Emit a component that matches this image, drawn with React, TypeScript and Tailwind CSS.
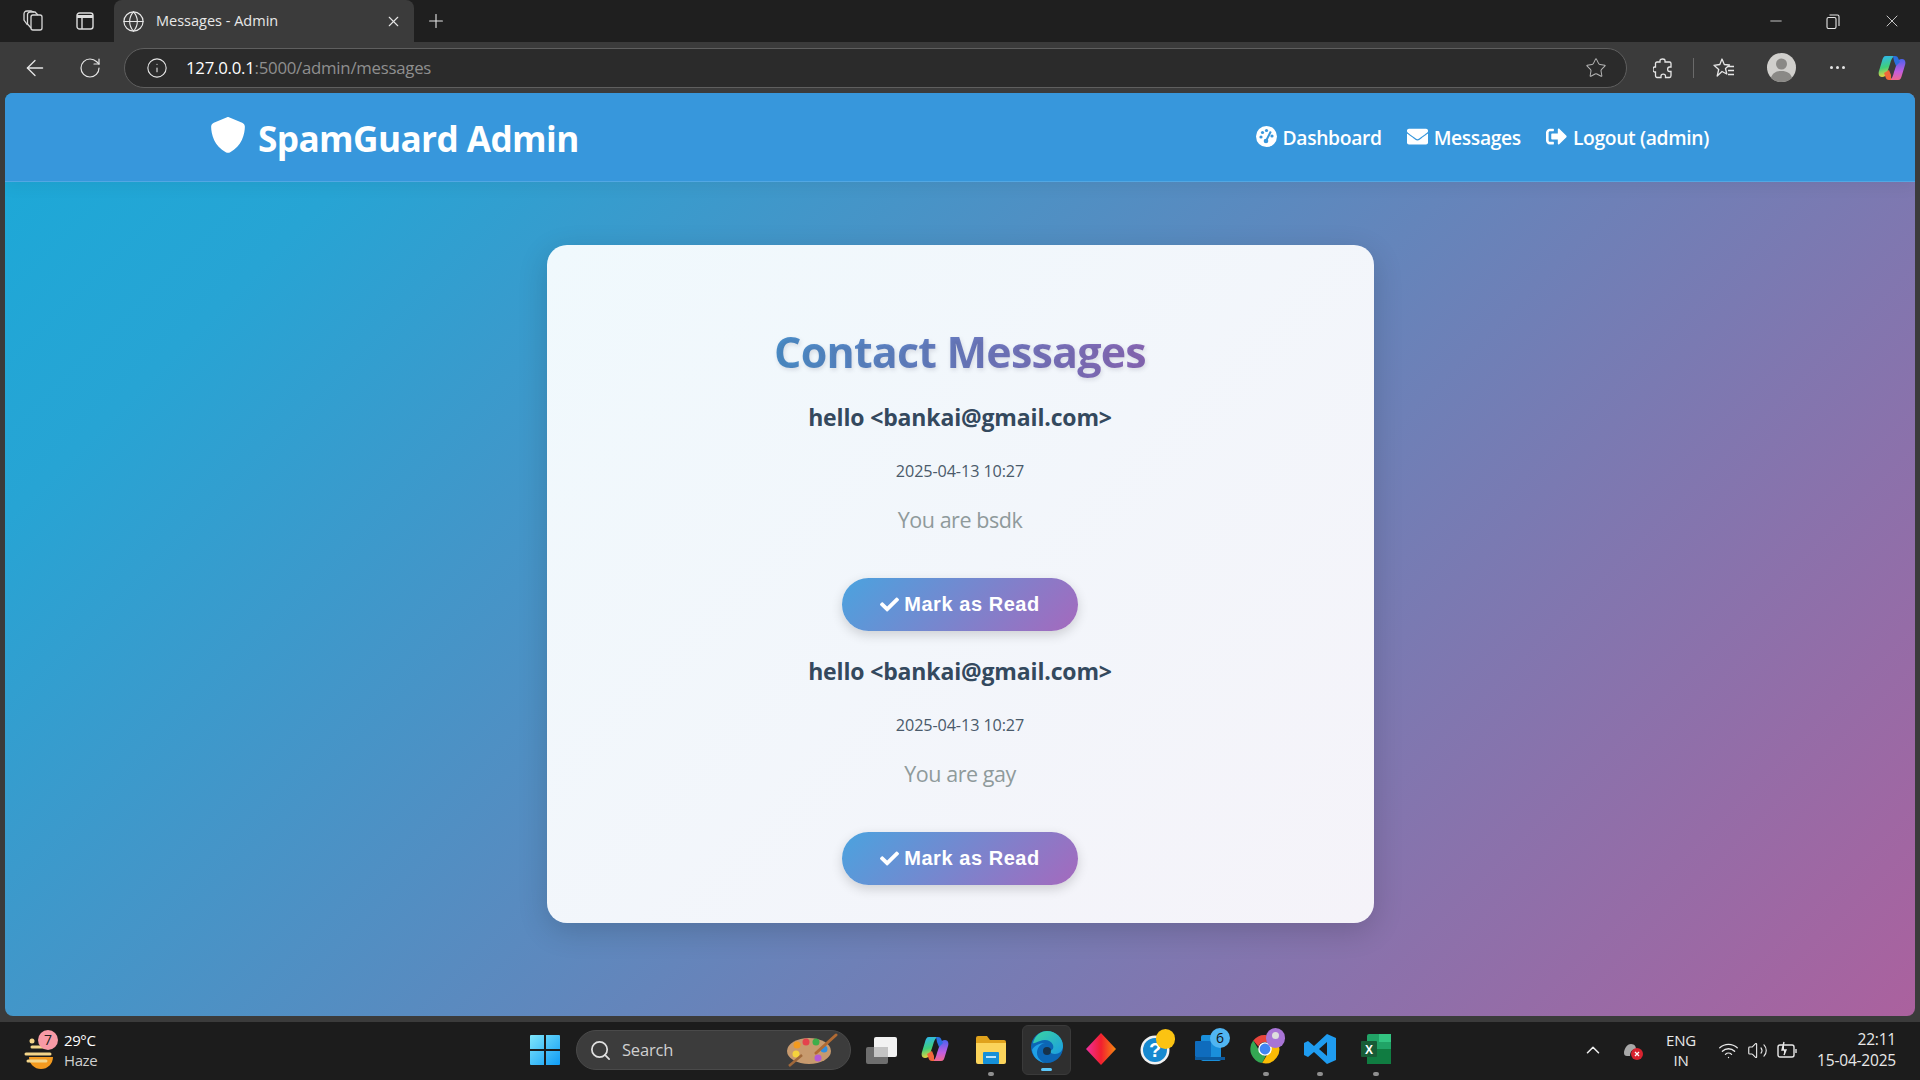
import { ArrowLeft, ChevronUp, Globe, Info, Minus, Plus, RotateCw, Search, Star, Volume2, Wifi, X } from "lucide-react";
import { FaCheck, FaEnvelope, FaSignOutAlt } from "react-icons/fa";
import { FaShield } from "react-icons/fa6";

const uiFont = "font-['Open_Sans','Noto_Sans',sans-serif]";

function CopilotIcon({ size }: { size: number }) {
  return (
    <svg width={size} height={size} viewBox="0 0 30 30">
      <defs>
        <linearGradient id={`cpa${size}`} x1="0.2" y1="0" x2="0.4" y2="1">
          <stop offset="0" stopColor="#2fb6f0" />
          <stop offset="0.55" stopColor="#3fcf7a" />
          <stop offset="1" stopColor="#f5d33c" />
        </linearGradient>
        <linearGradient id={`cpb${size}`} x1="0.6" y1="0" x2="0.6" y2="1">
          <stop offset="0" stopColor="#4a62ee" />
          <stop offset="0.6" stopColor="#c25de0" />
          <stop offset="1" stopColor="#f0688c" />
        </linearGradient>
      </defs>
      <path d="M9 3h9c-3 1-4 4-5 8l-3 9c-.8 2.500-2.500 4-5 4-3 0-4-3-3-6l3-10c.8-3 1.500-5 4-5z" fill={`url(#cpa${size})`} />
      <path d="M21 27h-9c3-1 4-4 5-8l3-9c.8-2.500 2.500-4 5-4 3 0 4 3 3 6l-3 10c-.8 3-1.500 5-4 5z" fill={`url(#cpb${size})`} />
      <path d="M16 3h2c2 0 3 1 3.500 3l1.500 3-4 4-2-5z" fill="#2a6fe0" />
      <path d="M14 27h-2c-2 0-3-1-3.500-3L7 20l5-3 2 5z" fill="#f2683a" />
    </svg>
  );
}

function DashboardIcon() {
  return (
    <svg width="21" height="21" viewBox="0 0 21 21">
      <circle cx="10.500" cy="10.500" r="10.500" fill="#fff" />
      <circle cx="5" cy="11" r="1.600" fill="#3797dc" />
      <circle cx="6.500" cy="6.500" r="1.600" fill="#3797dc" />
      <circle cx="10.500" cy="4.500" r="1.600" fill="#3797dc" />
      <circle cx="16" cy="10" r="1.600" fill="#3797dc" />
      <path d="M14.800 5.500 10.500 14" stroke="#3797dc" strokeWidth="2" />
      <circle cx="10" cy="15" r="2.300" fill="#3797dc" />
    </svg>
  );
}

function BrowserChrome() {
  return (
    <>
      <div className="h-[42px] flex items-center bg-[#1f1f1f] text-[#e6e6e6] shrink-0">
        <svg className="ml-[22px]" width="22" height="24" viewBox="0 0 22 24" fill="none" stroke="#d8d8d8" strokeWidth="1.300">
          <rect x="9" y="6" width="11" height="15" rx="2" />
          <path d="M9 19 5.500 15V5.500C5.500 4 7 3 8 3h5l3 3" />
          <path d="M5.500 16 2 11V5c0-1.500 1-3 3-3h4l3 1" />
        </svg>
        <svg className="ml-[32px]" width="18" height="18" viewBox="0 0 18 18" fill="none" stroke="#dcdcdc" strokeWidth="1.400">
          <rect x="1" y="1" width="16" height="16" rx="2.500" />
          <path d="M1 4.500h16" strokeWidth="3" />
          <path d="M6 5v12" />
        </svg>
        <div className="ml-[20px] w-[300px] h-full flex items-center bg-[#3b3b3b] rounded-t-lg">
          <Globe className="ml-[8px]" size={23} strokeWidth={1.2} color="#e6e6e6" />
          <span className={`ml-[11px] flex-1 text-[14.500px] text-[#e8e8e8] -mt-[1px] ${uiFont}`}>Messages - Admin</span>
          <X className="mr-[12px]" size={17} strokeWidth={1.5} />
        </div>
        <Plus className="ml-[11px]" size={22} strokeWidth={1.2} />
        <div className="ml-auto flex items-center">
          <Minus size={18} strokeWidth={1.100} />
          <svg className="ml-[41px]" width="14" height="15" viewBox="0 0 14 15" fill="none" stroke="#e6e6e6" strokeWidth="1.100">
            <rect x="1" y="3.500" width="9" height="11" rx="1.500" />
            <path d="M3.500 1h8c1 0 1.500.5 1.500 1.500V12" />
          </svg>
          <X className="ml-[42px] mr-[18px]" size={20} strokeWidth={1} />
        </div>
      </div>
      <div className="h-[51px] flex items-center bg-[#3b3b3b] text-[#e6e6e6] shrink-0">
        <ArrowLeft className="ml-[22px]" size={26} strokeWidth={1.2} />
        <RotateCw className="ml-[30px]" size={24} strokeWidth={1.2} />
        <div className="ml-[22px] w-[1503px] h-[40px] flex items-center rounded-full border border-[#5f5f5f] bg-[#2b2b2b]">
          <Info className="ml-[21px]" size={22} strokeWidth={1.2} />
          <span className={`ml-[18px] flex-1 text-[16.800px] tracking-[-0.25px] ${uiFont}`}>
            <span className="text-white">127.0.0.1</span>
            <span className="text-[#8f8f8f]">:5000/admin/messages</span>
          </span>
          <Star className="mr-[19px]" size={22} strokeWidth={1.1} color="#b5b5b5" />
        </div>
        <svg className="ml-[26px]" width="20" height="22" viewBox="0 0 20 22" fill="none" stroke="#e6e6e6" strokeWidth="1.300">
          <path d="M7 3.500C7 1.500 12 1.500 12 3.500V5h4.500c1 0 1.500.5 1.500 1.500V10h-1.500c-2.500 0-2.500 4.500 0 4.500H18v4c0 1-.5 2-1.500 2H12.500v-1.500c0-2.500-4.500-2.500-4.500 0v1.500H4c-1 0-1.500-1-1.500-2V15H1.500C-.5 15-.5 10 1.500 10h1V6.500C2.500 5.500 3 5 4 5h3z" />
        </svg>
        <div className="ml-[20px] w-px h-[20px] bg-[#6a6a6a]" />
        <svg className="ml-[19px]" width="22" height="22" viewBox="0 0 22 22" fill="none" stroke="#e6e6e6" strokeWidth="1.300">
          <path d="M9 2l2.300 5.500 5.200.5-4 3.500 1.300 5.500L9 14.500 4.200 19l1.500-6.500L1 8.300 6.800 7.500z" strokeLinejoin="round" />
          <path d="M15 9.500h6M15 13.500h6M15 17.500h6" />
        </svg>
        <svg className="ml-[32px]" width="29" height="29" viewBox="0 0 29 29">
          <circle cx="14.500" cy="14.500" r="14.500" fill="#d0cfcc" />
          <circle cx="14.500" cy="11" r="5.500" fill="#8a8986" />
          <path d="M4 25c1.500-5 5-7 10.500-7S23.500 20 25 25c-2.500 2.500-6 4-10.500 4S6.500 27.500 4 25z" fill="#8a8986" />
        </svg>
        <div className="ml-[34px] flex gap-[3px]">
          <div className="w-[3px] h-[3px] rounded-full bg-[#e6e6e6]" />
          <div className="w-[3px] h-[3px] rounded-full bg-[#e6e6e6]" />
          <div className="w-[3px] h-[3px] rounded-full bg-[#e6e6e6]" />
        </div>
        <div className="ml-[32px]">
          <CopilotIcon size={30} />
        </div>
      </div>
    </>
  );
}

function NavLink({ icon, label }: { icon: React.ReactNode; label: string }) {
  return (
    <a className="flex items-center gap-[6px] text-[19.300px] font-semibold text-white tracking-[-0.35px]">
      <span className="-mt-[5px]">{icon}</span>
      {label}
    </a>
  );
}

function MessageItem({ message }: { message: string }) {
  return (
    <div className="flex flex-col items-center">
      <h3 className="mt-[19px] mb-[1px] h-[32px] leading-[32px] text-[23px] font-bold text-[#34495e] tracking-[-0.15px]">
        {"hello <bankai@gmail.com>"}
      </h3>
      <p className="mt-[26px] h-[22px] leading-[22px] text-[16.200px] text-[#4a5a6a] tracking-[-0.1px]">2025-04-13 10:27</p>
      <p className="mt-[23px] h-[30px] leading-[30px] text-[21.500px] text-[#8f9a9b] tracking-[-0.45px]">{message}</p>
      <button className="mt-[43px] w-[236px] h-[53px] flex items-center justify-center gap-[5px] rounded-full bg-[linear-gradient(135deg,#4aa3df,#a569bd)] text-white text-[20px] font-bold tracking-[0.55px] font-['Liberation_Sans',sans-serif] shadow-[0_4px_12px_rgba(0,0,0,0.16)]">
        <FaCheck size={19} />
        <span className="-mt-[2px]">Mark as Read</span>
      </button>
    </div>
  );
}

function Page() {
  return (
    <div className={`h-[923px] mx-[5px] shrink-0 flex flex-col rounded-t-lg rounded-b-lg overflow-hidden bg-[linear-gradient(135deg,#1ba9d8_0%,#27a4d4_15%,#ab619e_100%)] ${uiFont}`}>
      <nav className="h-[89px] shrink-0 flex items-center justify-between pl-[205px] pr-[206px] bg-[#3797dc] border-b border-[#52a7e3] shadow-[0_4px_16px_rgba(0,0,0,0.06)]">
        <div className="flex items-center gap-[12px] mt-[1px]">
          <FaShield size={36} color="#fff" className="-mt-[4px]" />
          <span className="text-[35.200px] font-bold text-white tracking-[-0.6px] mt-[1px]">SpamGuard Admin</span>
        </div>
        <div className="flex items-center gap-[25px] mt-[3px]">
          <NavLink icon={<DashboardIcon />} label="Dashboard" />
          <NavLink icon={<FaEnvelope size={21} />} label="Messages" />
          <NavLink icon={<FaSignOutAlt size={21} />} label="Logout (admin)" />
        </div>
      </nav>
      <main className="flex-1 flex justify-center pt-[63px]">
        <div className="w-[827px] h-[678px] rounded-[20px] bg-[linear-gradient(135deg,#f0f9fd,#f5f3f9)] shadow-[0_8px_30px_rgba(0,0,0,0.16)] pt-[77px]">
          <h1 className="h-[60px] leading-[60px] text-center text-[43px] font-bold tracking-[-0.8px] [text-shadow:1px_2px_4px_rgba(60,60,90,0.15)]">
            <span className="bg-[linear-gradient(90deg,#4a90cc,#8a68b8)] bg-clip-text text-transparent">Contact Messages</span>
          </h1>
          <MessageItem message="You are bsdk" />
          <div className="h-[5px]" />
          <MessageItem message="You are gay" />
        </div>
      </main>
    </div>
  );
}

function TaskDot({ active }: { active?: boolean }) {
  return <div className={active ? "w-[11px] h-[3px] rounded-full bg-[#5cc8fa]" : "w-[6px] h-[4px] rounded-full bg-[#8f8f8f]"} />;
}

function TaskIcon({ children, dot, className }: { children: React.ReactNode; dot?: boolean; className?: string }) {
  return (
    <div className={`relative w-[32px] h-[58px] flex flex-col items-center shrink-0 ${className ?? ""}`}>
      <div className="mt-[10px] h-[34px] flex items-center justify-center">{children}</div>
      {dot && (
        <div className="mt-[6px]">
          <TaskDot />
        </div>
      )}
    </div>
  );
}

function Taskbar() {
  return (
    <div className={`h-[58px] mt-[6px] shrink-0 flex items-center bg-[#1c1c1c] text-[#e8e8e8] ${uiFont}`}>
      {/* weather */}
      <div className="relative ml-[24px] w-[32px] h-[34px] mt-[2px] shrink-0">
        <svg width="32" height="34" viewBox="0 0 32 34">
          <path d="M5 22h24a12 12 0 0 1-24 0z" fill="#f39a1f" />
          <path d="M8 12h16M2 19h24M4 26h18" stroke="#f4d58a" strokeWidth="3" strokeLinecap="round" />
          <circle cx="8" cy="6" r="2.500" fill="#f4d58a" />
        </svg>
        <div className="absolute -top-[5px] left-[14px] w-[20px] h-[20px] rounded-full bg-[#f89aa6] text-[#222] text-[14px] leading-[20px] text-center">7</div>
      </div>
      <div className="ml-[8px] w-[50px] text-[15px] leading-[20px] tracking-[-0.4px] -mt-[3px]">
        <div className="text-white">29°C</div>
        <div className="text-[#cfcfcf]">Haze</div>
      </div>
      {/* start */}
      <svg className="ml-[416px] shrink-0 -mt-[2px]" width="30" height="30" viewBox="0 0 30 30">
        <defs>
          <linearGradient id="win" x1="0" y1="0" x2="1" y2="1">
            <stop offset="0" stopColor="#7fe6fb" />
            <stop offset="1" stopColor="#0f9cf5" />
          </linearGradient>
        </defs>
        <path d="M0 1a1 1 0 0 1 1-1h13v14H0zM16 0h13a1 1 0 0 1 1 1v13H16zM0 16h14v14H1a1 1 0 0 1-1-1zM16 16h14v13a1 1 0 0 1-1 1H16z" fill="url(#win)" />
      </svg>
      {/* search */}
      <div className="ml-[16px] w-[275px] h-[40px] -mt-[2px] shrink-0 flex items-center rounded-full bg-[#3c3c3c] border border-[#4a4a4a]">
        <Search className="ml-[12px]" size={23} strokeWidth={1.8} color="#e0e0e0" />
        <span className="ml-[10px] flex-1 text-[16.500px] text-[#d0d0d0] tracking-[-0.2px]">Search</span>
        <svg className="mr-[12px]" width="52" height="34" viewBox="0 0 52 34">
          <ellipse cx="23" cy="18" rx="22" ry="13" fill="#c79a6e" />
          <circle cx="11" cy="12" r="3.500" fill="#f39a1f" />
          <circle cx="20" cy="9" r="3.500" fill="#e5424d" />
          <circle cx="30" cy="9" r="3.500" fill="#3fae4a" />
          <circle cx="38" cy="16" r="3.500" fill="#2f8fe0" />
          <circle cx="32" cy="25" r="3.500" fill="#b45ad6" />
          <circle cx="10" cy="21" r="3.500" fill="#f5d33c" />
          <path d="M30 20 50 2" stroke="#b06a33" strokeWidth="3" strokeLinecap="round" />
          <path d="M3 33 16 22" stroke="#a0683a" strokeWidth="2.500" />
        </svg>
      </div>
      {/* task view */}
      <svg className="ml-[15px] shrink-0 -mt-[2px]" width="31" height="27" viewBox="0 0 31 27">
        <rect x="0" y="10" width="22" height="17" rx="2" fill="#6e6e6e" />
        <rect x="8" y="0" width="23" height="20" rx="2" fill="#f2f2f2" />
        <rect x="8" y="10" width="14" height="10" fill="#c4c4c4" />
      </svg>
      {/* pinned */}
      <TaskIcon className="ml-[22px]">
        <CopilotIcon size={30} />
      </TaskIcon>
      <TaskIcon className="ml-[24px]" dot>
        <svg width="30" height="29" viewBox="0 0 30 29">
          <path d="M0 3a2 2 0 0 1 2-2h9l3 4h14a2 2 0 0 1 2 2v4H0z" fill="#e0a21c" />
          <path d="M0 8h30v19a2 2 0 0 1-2 2H2a2 2 0 0 1-2-2z" fill="#fbd45b" />
          <rect x="7" y="17" width="16" height="12" rx="1" fill="#1590d8" />
          <rect x="10" y="21" width="10" height="2" fill="#bfe6fb" />
        </svg>
      </TaskIcon>
      <div className="ml-[15px] w-[49px] h-[50px] -mt-[2px] shrink-0 flex flex-col items-center rounded-md bg-[#2f2f2f] border border-[#3a3a3a]">
        <svg className="mt-[5px]" width="32" height="32" viewBox="0 0 32 32">
          <defs>
            <linearGradient id="edgeA" x1="0" y1="0" x2="1" y2="1">
              <stop offset="0" stopColor="#3bd6a0" />
              <stop offset="1" stopColor="#1b9de2" />
            </linearGradient>
          </defs>
          <circle cx="16" cy="16" r="16" fill="#0c66b5" />
          <path d="M2 12C4 4 10 0 16 0c9 0 16 7 16 15 0 5-4 8-8 8-3 0-5-1-5-3 3-1 4-3 3-6-2-5-8-6-13-4-4 1-6 3-7 2z" fill="url(#edgeA)" />
          <path d="M14 12c-5 1-8 5-8 10 0 4 3 8 8 10-7-1-12-6-13-13 2-4 7-7 13-7z" fill="#1fa0e6" />
          <circle cx="16" cy="20" r="4" fill="#1c1c1c" opacity="0.7" />
        </svg>
        <div className="mt-[5px]">
          <TaskDot active />
        </div>
      </div>
      <TaskIcon className="ml-[14px]">
        <svg width="30" height="32" viewBox="0 0 30 32">
          <defs>
            <linearGradient id="dia" x1="0" y1="0" x2="1" y2="0">
              <stop offset="0" stopColor="#ef2fa0" />
              <stop offset="0.5" stopColor="#f21f2f" />
              <stop offset="1" stopColor="#f58a10" />
            </linearGradient>
          </defs>
          <path d="M15 0 30 16 15 32 0 16z" fill="url(#dia)" />
        </svg>
      </TaskIcon>
      <TaskIcon className="ml-[23px]">
        <div className="relative w-[32px] h-[32px]">
          <svg width="30" height="32" viewBox="0 0 30 32">
            <circle cx="15" cy="17" r="14.500" fill="#f2f2f2" />
            <circle cx="15" cy="17" r="12" fill="#1689d0" />
            <text x="15" y="24" textAnchor="middle" fontSize="20" fontWeight="700" fill="#fff" fontFamily="Liberation Sans">?</text>
          </svg>
          <div className="absolute -top-[4px] left-[16px] w-[19px] h-[20px] rounded-full bg-[#fbc312]" />
        </div>
      </TaskIcon>
      <TaskIcon className="ml-[23px]">
        <div className="relative w-[32px] h-[32px]">
          <svg width="30" height="32" viewBox="0 0 30 32">
            <rect x="6" y="2" width="20" height="26" rx="2" fill="#1a8fdb" />
            <rect x="0" y="8" width="16" height="16" rx="1" fill="#0f6cbd" />
            <path d="M0 24h30v3H0z" fill="#0c5a9e" />
          </svg>
          <div className="absolute -top-[5px] left-[15px] w-[20px] h-[20px] rounded-full bg-[#50b5f2] text-[#111] text-[14px] leading-[20px] text-center">6</div>
        </div>
      </TaskIcon>
      <TaskIcon className="ml-[23px]" dot>
        <div className="relative w-[32px] h-[32px]">
          <svg width="30" height="32" viewBox="0 0 32 32">
            <path d="M16 1a15 15 0 0 1 13 7.500H16a7.500 7.500 0 0 0-7 4.800L3.500 7A15 15 0 0 1 16 1z" fill="#e8453c" />
            <path d="M3.500 7 10 18a7.500 7.500 0 0 0 7 5l-4 8A15 15 0 0 1 3.500 7z" fill="#34a853" />
            <path d="M29 8.500A15 15 0 0 1 13 31l6.500-11a7.500 7.500 0 0 0-1-11.500z" fill="#fbbc05" />
            <circle cx="16" cy="16" r="6.500" fill="#4285f4" stroke="#fff" strokeWidth="1.500" />
          </svg>
          <div className="absolute -top-[5px] left-[16px] w-[19px] h-[20px] rounded-full bg-[#a874d6]">
            <div className="mx-auto mt-[4px] w-[7px] h-[7px] rounded-full bg-[#ddd]" />
          </div>
        </div>
      </TaskIcon>
      <TaskIcon className="ml-[22px]" dot>
        <svg width="32" height="32" viewBox="0 0 32 32">
          <path d="M23 1 32 5v22l-9 4-13-12-6 5-4-2V10l4-2 6 5zM23 9l-8 7 8 7z" fill="#1f9cf0" />
        </svg>
      </TaskIcon>
      <TaskIcon className="ml-[24px]" dot>
        <svg width="30" height="30" viewBox="0 0 30 30">
          <rect x="6" y="0" width="24" height="30" rx="2" fill="#21a366" />
          <rect x="18" y="0" width="12" height="8" fill="#33c481" />
          <rect x="6" y="15" width="24" height="15" fill="#107c41" />
          <rect x="0" y="7" width="16" height="16" rx="1" fill="#185c37" />
          <text x="8" y="20" textAnchor="middle" fontSize="12" fontWeight="700" fill="#fff" fontFamily="Liberation Sans">X</text>
        </svg>
      </TaskIcon>
      {/* tray */}
      <ChevronUp className="ml-[190px] shrink-0 -mt-[2px]" size={22} strokeWidth={1.7} color="#eee" />
      <svg className="ml-[18px] shrink-0 -mt-[2px]" width="22" height="20" viewBox="0 0 22 20">
        <path d="M2 13c0-4 3-9 7-9s5 3 5 5c-4 0-6 3-6 7H5c-2 0-3-1-3-3z" fill="#a8a8a8" />
        <circle cx="15" cy="14" r="6" fill="#d8232f" />
        <path d="M13 12l4 4M17 12l-4 4" stroke="#fff" strokeWidth="1.300" />
      </svg>
      <div className="ml-[17px] w-[40px] shrink-0 text-center text-[15px] leading-[20px] tracking-[-0.2px] -mt-[3px]">
        <div>ENG</div>
        <div>IN</div>
      </div>
      <Wifi className="ml-[17px] shrink-0 -mt-[2px]" size={21} strokeWidth={1.5} />
      <Volume2 className="ml-[8px] shrink-0 -mt-[2px]" size={21} strokeWidth={1.3} />
      <svg className="ml-[9px] shrink-0 -mt-[2px]" width="20" height="20" viewBox="0 0 20 20" fill="none" stroke="#e8e8e8" strokeWidth="1.400">
        <rect x="1" y="5" width="16" height="12" rx="2" />
        <path d="M19 9v4" />
        <path d="M7 2 5 10h4l-2 5" fill="#e8e8e8" />
      </svg>
      <div className="ml-auto mr-[24px] text-right text-[15.500px] leading-[21px] tracking-[-0.2px] -mt-[3px]">
        <div>22:11</div>
        <div>15-04-2025</div>
      </div>
    </div>
  );
}

export default function App() {
  return (
    <div className="w-[1920px] h-[1080px] flex flex-col overflow-hidden bg-[#3b3b3b]">
      <BrowserChrome />
      <Page />
      <Taskbar />
    </div>
  );
}
